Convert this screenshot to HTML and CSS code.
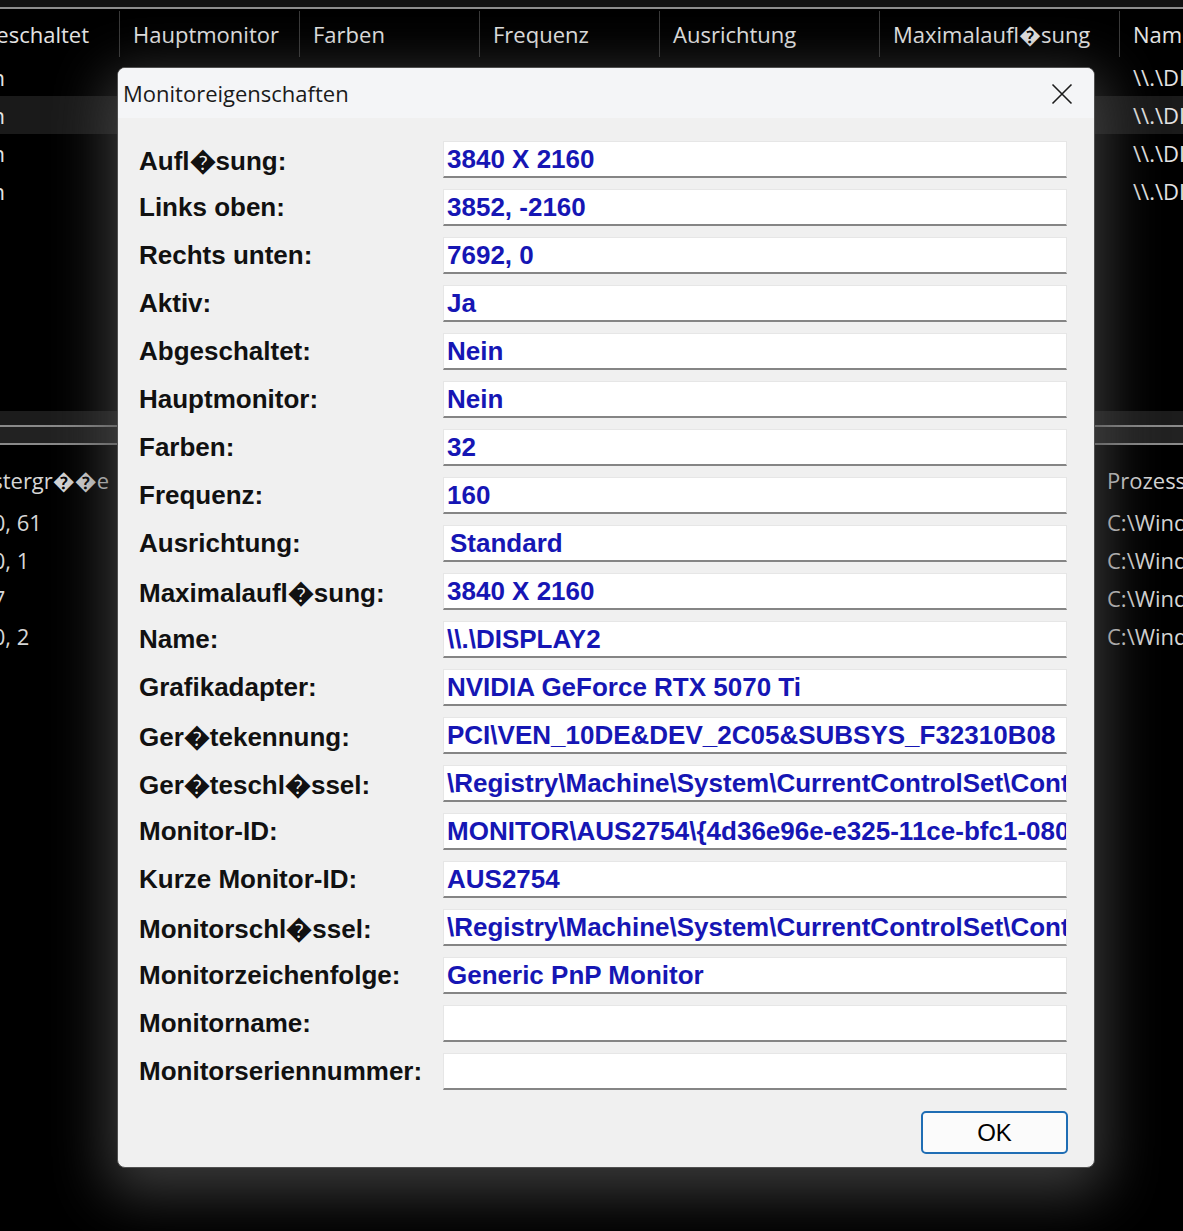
FILE: index.html
```
<!DOCTYPE html>
<html lang="de">
<head>
    <meta charset="UTF-8">
    <title>Monitoreigenschaften</title>
    <link rel="stylesheet" href="styles.css">
</head>
<body>
    <div id="app">
        <div class="topstrip"></div>
        <div class="list list-top">
            <div class="row head">
                <span>Abgeschaltet</span>
                <span>Hauptmonitor</span>
                <span>Farben</span>
                <span>Frequenz</span>
                <span>Ausrichtung</span>
                <span>Maximalaufl&#xFFFD;sung</span>
                <span>Name</span>
            </div>
            <div class="row">
                <span>Nein</span><span></span><span></span><span></span><span></span><span></span><span>\\.\DISPLAY1</span>
            </div>
            <div class="row selected">
                <span>Nein</span><span></span><span></span><span></span><span></span><span></span><span>\\.\DISPLAY2</span>
            </div>
            <div class="row">
                <span>Nein</span><span></span><span></span><span></span><span></span><span></span><span>\\.\DISPLAY3</span>
            </div>
            <div class="row">
                <span>Nein</span><span></span><span></span><span></span><span></span><span></span><span>\\.\DISPLAY4</span>
            </div>
        </div>
        <div class="splitter">
            <div class="split-line"></div>
            <div class="split-gap"></div>
            <div class="split-line"></div>
        </div>
        <div class="list list-bottom">
            <div class="row head">
                <span>Fenstergr&#xFFFD;&#xFFFD;e</span>
                <span></span>
                <span>Prozess</span>
            </div>
            <div class="row"><span>2560, 61</span><span></span><span>C:\Windows\explorer.exe</span></div>
            <div class="row"><span>2560, 1</span><span></span><span>C:\Windows\explorer.exe</span></div>
            <div class="row"><span>1047</span><span></span><span>C:\Windows\explorer.exe</span></div>
            <div class="row"><span>2560, 2</span><span></span><span>C:\Windows\explorer.exe</span></div>
        </div>
    </div>

    <div class="dialog">
        <div class="dialog-title">
            <span>Monitoreigenschaften</span>
            <svg class="close" width="22" height="22" viewBox="0 0 22 22">
                <path d="M1.5 1.5 L20.5 20.5 M20.5 1.5 L1.5 20.5" stroke="#1b1b1b" stroke-width="1.6" fill="none"/>
            </svg>
        </div>
        <div class="dialog-body">
            <div class="props">
                <label>Aufl&#xFFFD;sung:</label><div class="field">3840 X 2160</div>
                <label>Links oben:</label><div class="field">3852, -2160</div>
                <label>Rechts unten:</label><div class="field">7692, 0</div>
                <label>Aktiv:</label><div class="field">Ja</div>
                <label>Abgeschaltet:</label><div class="field">Nein</div>
                <label>Hauptmonitor:</label><div class="field">Nein</div>
                <label>Farben:</label><div class="field">32</div>
                <label>Frequenz:</label><div class="field">160</div>
                <label>Ausrichtung:</label><div class="field indent">Standard</div>
                <label>Maximalaufl&#xFFFD;sung:</label><div class="field">3840 X 2160</div>
                <label>Name:</label><div class="field">\\.\DISPLAY2</div>
                <label>Grafikadapter:</label><div class="field">NVIDIA GeForce RTX 5070 Ti</div>
                <label>Ger&#xFFFD;tekennung:</label><div class="field">PCI\VEN_10DE&amp;DEV_2C05&amp;SUBSYS_F32310B08</div>
                <label>Ger&#xFFFD;teschl&#xFFFD;ssel:</label><div class="field">\Registry\Machine\System\CurrentControlSet\Control\Class</div>
                <label>Monitor-ID:</label><div class="field">MONITOR\AUS2754\{4d36e96e-e325-11ce-bfc1-08002be10318}</div>
                <label>Kurze Monitor-ID:</label><div class="field">AUS2754</div>
                <label>Monitorschl&#xFFFD;ssel:</label><div class="field">\Registry\Machine\System\CurrentControlSet\Control\Class</div>
                <label>Monitorzeichenfolge:</label><div class="field">Generic PnP Monitor</div>
                <label>Monitorname:</label><div class="field"></div>
                <label>Monitorseriennummer:</label><div class="field"></div>
            </div>
            <div class="buttons">
                <button class="btn-ok">OK</button>
            </div>
        </div>
    </div>
</body>
</html>
```

FILE: styles.css
```
*{
    margin: 0;
    padding: 0;
    box-sizing: border-box;
}
body{
    width: 1183px;
    height: 1231px;
    overflow: hidden;
    background: #000;
    font-family: "Open Sans", "DejaVu Sans", sans-serif;
    position: relative;
}
#app{
    height: 100%;
    display: flex;
    flex-direction: column;
    overflow: hidden;
}
.topstrip{
    height: 9px;
    background: #121212;
    border-bottom: 2px solid #8e8e8e;
    flex: none;
}
.list{
    flex: none;
}
.list-top{
    height: 402px;
    margin-left: -56px;
}
.row{
    display: flex;
    height: 38px;
    align-items: center;
    color: #e4e4e4;
    font-size: 22px;
    white-space: nowrap;
}
.row span{
    flex: none;
    padding-left: 13px;
    overflow: hidden;
    height: 100%;
    display: flex;
    align-items: center;
}
.row.selected{
    background: #1a1a1a;
}
.list-top .row span:nth-child(1){ width: 176px; }
.list-top .row span:nth-child(2),
.list-top .row span:nth-child(3),
.list-top .row span:nth-child(4){ width: 180px; }
.list-top .row span:nth-child(5){ width: 220px; }
.list-top .row span:nth-child(6){ width: 240px; }
.list-top .row span:nth-child(7){ width: 200px; }
.list-top .head{
    height: 49px;
}
.list-top .head span{
    border-right: 1px solid #3a3a3a;
    height: 46px;
}
.splitter{
    flex: none;
    background: #1c1c1c;
    padding-top: 14px;
}
.split-line{
    height: 2px;
    background: #8a8a8a;
}
.split-gap{
    height: 16px;
    background: #222;
}
.list-bottom{
    margin-left: -57px;
}
.list-bottom .head{
    height: 58px;
    padding-top: 12px;
}
.list-bottom .row{
    color: #d6d6d6;
}
.list-bottom .row span{
    padding-left: 12px;
}
.list-bottom .row span:nth-child(1){ width: 180px; }
.list-bottom .row span:nth-child(2){ width: 972px; }
.list-bottom .row span:nth-child(3){ width: 200px; }

/* dialog */
.dialog{
    position: absolute;
    left: 117px;
    top: 67px;
    width: 978px;
    height: 1101px;
    background: #f0f0f0;
    border: 1px solid #505050;
    border-radius: 8px;
    overflow: hidden;
    box-shadow: 0 16px 56px 10px rgba(72, 72, 72, 0.8);
    display: flex;
    flex-direction: column;
}
.dialog-title{
    height: 50px;
    flex: none;
    background: #f4f5f7;
    display: flex;
    align-items: center;
    justify-content: space-between;
    padding: 0 21px 0 5px;
    font-size: 22px;
    color: #1a1a1a;
}
.dialog-title .close{
    margin-top: 1px;
}
.dialog-body{
    padding: 23px 27px 13px 21px;
}
.props{
    display: grid;
    grid-template-columns: 304px 1fr;
    row-gap: 11px;
    align-items: center;
}
.props label{
    font-family: "Liberation Sans", Arial, sans-serif;
    font-weight: bold;
    font-size: 26px;
    color: #111;
    white-space: nowrap;
}
.field{
    height: 37px;
    background: #fff;
    border: 1px solid #e6e6e6;
    border-bottom: 2px solid #858585;
    padding-left: 3px;
    font-family: "Liberation Sans", Arial, sans-serif;
    font-weight: bold;
    font-size: 26px;
    color: #1616b4;
    white-space: nowrap;
    overflow: hidden;
    display: flex;
    align-items: center;
}
.field.indent{
    padding-left: 6px;
}
.buttons{
    display: flex;
    justify-content: flex-end;
    margin-top: 21px;
}
.btn-ok{
    width: 147px;
    height: 43px;
    margin-right: -1px;
    background: #fbfbfb;
    border: 2px solid #1f6db4;
    border-radius: 5px;
    font-family: "Liberation Sans", Arial, sans-serif;
    font-size: 24px;
    color: #000;
}
```
